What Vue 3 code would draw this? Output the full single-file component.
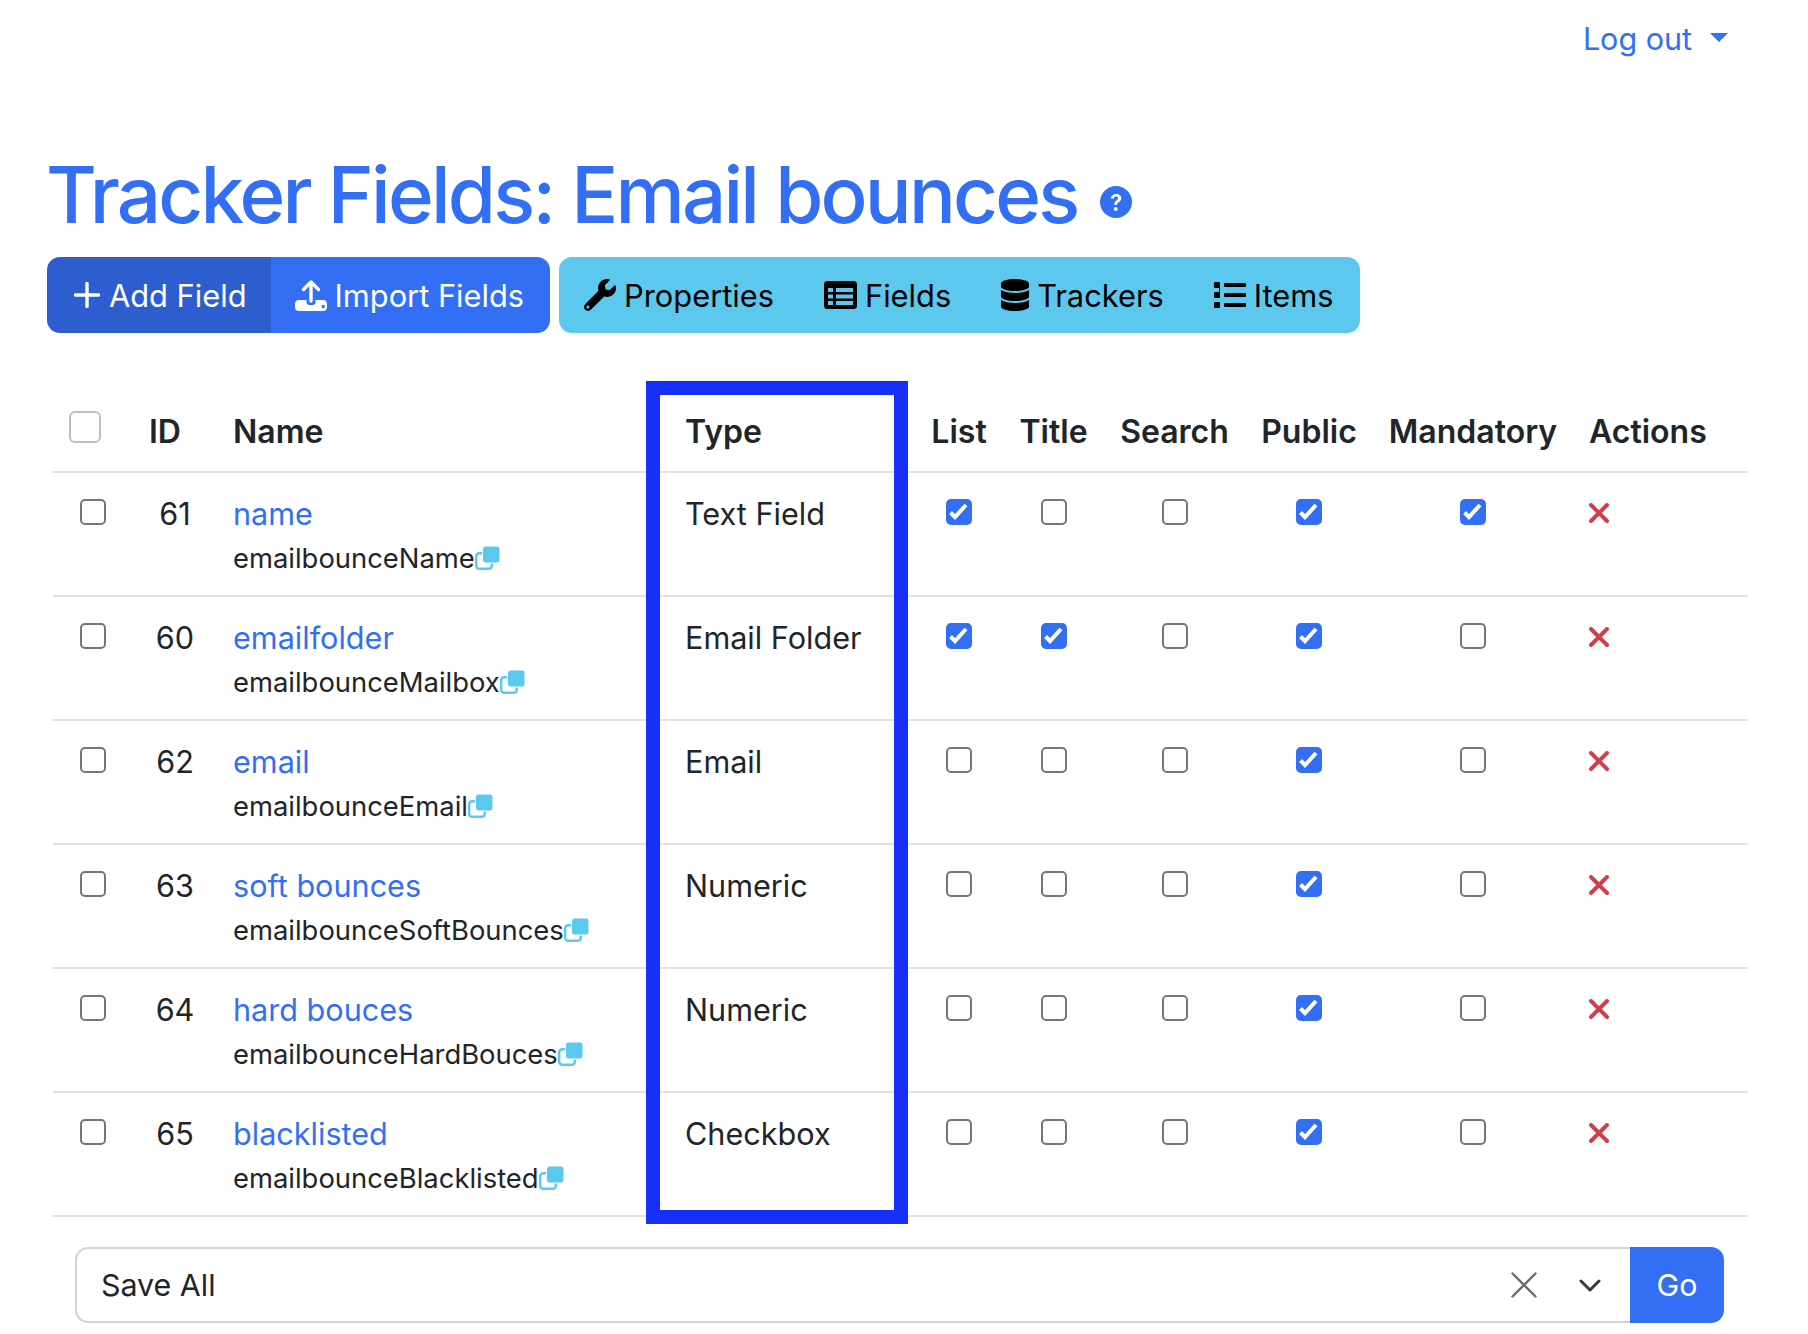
<script setup>
const rows = [
  { id: 61, name: 'name', perm: 'emailbounceName', type: 'Text Field', flags: [1, 0, 0, 1, 1] },
  { id: 60, name: 'emailfolder', perm: 'emailbounceMailbox', type: 'Email Folder', flags: [1, 1, 0, 1, 0] },
  { id: 62, name: 'email', perm: 'emailbounceEmail', type: 'Email', flags: [0, 0, 0, 1, 0] },
  { id: 63, name: 'soft bounces', perm: 'emailbounceSoftBounces', type: 'Numeric', flags: [0, 0, 0, 1, 0] },
  { id: 64, name: 'hard bouces', perm: 'emailbounceHardBouces', type: 'Numeric', flags: [0, 0, 0, 1, 0] },
  { id: 65, name: 'blacklisted', perm: 'emailbounceBlacklisted', type: 'Checkbox', flags: [0, 0, 0, 1, 0] }
]
const heads = ['List', 'Title', 'Search', 'Public', 'Mandatory']
</script>

<template>
  <div class="page">
    <nav class="topnav">
      <a class="logout">Log out<span class="caret"></span></a>
    </nav>

    <h1 class="title">
      <span>Tracker Fields: Email bounces</span>
      <svg class="help" viewBox="0 0 32 32">
        <circle cx="16" cy="16" r="16" fill="#336ff5" />
        <path d="M10.800 12.400c.3-3 2.400-4.500 5.300-4.500 3 0 5.200 1.700 5.200 4.300 0 1.900-1 3-2.500 4-1.200.8-1.600 1.300-1.600 2.500h-2.900c-.1-2.100.6-3.200 2-4.200 1.100-.8 1.800-1.300 1.800-2.200 0-1-.8-1.700-2-1.700-1.300 0-2.100.8-2.300 2.100z" fill="#fff" />
        <circle cx="15.700" cy="23" r="2" fill="#fff" />
      </svg>
    </h1>

    <div class="toolbar">
      <div class="group">
        <a class="btn btn-dark-primary">
          <svg class="ico plus" viewBox="0 0 26 26"><path d="M13 1.500v23M1.500 13h23" stroke="#fff" stroke-width="3.400" stroke-linecap="round" fill="none" /></svg>
          Add Field
        </a>
        <a class="btn btn-primary">
          <svg class="ico upload" viewBox="0 0 32 32">
            <path d="M16 22V3M8.500 10.500 16 3l7.500 7.500" stroke="#fff" stroke-width="3.400" stroke-linecap="round" stroke-linejoin="round" fill="none" />
            <path fill-rule="evenodd" d="M4 21h7.500v2a3 3 0 0 0 3 3h3a3 3 0 0 0 3-3v-2H28a4 4 0 0 1 4 4v3a4 4 0 0 1-4 4H4a4 4 0 0 1-4-4v-3a4 4 0 0 1 4-4zm22.500 6.500a1.700 1.700 0 1 0 0-.01z" fill="#fff" />
          </svg>
          Import Fields
        </a>
      </div>
      <div class="group teal">
        <a class="btn">
          <svg class="ico" viewBox="0 0 512 512"><path d="M507.730 109.100c-2.240-9.030-13.540-12.090-20.120-5.510l-74.360 74.360-67.880-11.310-11.310-67.880 74.360-74.360c6.620-6.620 3.430-17.900-5.660-20.160-47.380-11.740-99.550.91-136.580 37.930-39.640 39.640-50.550 97.100-34.050 147.200L18.740 402.760c-24.990 24.990-24.990 65.510 0 90.500 24.990 24.990 65.510 24.990 90.500 0l213.210-213.210c50.120 16.710 107.470 5.680 147.370-34.220 37.070-37.070 49.700-89.320 37.910-136.730zM64 472c-13.250 0-24-10.750-24-24 0-13.260 10.750-24 24-24s24 10.740 24 24c0 13.250-10.750 24-24 24z" /></svg>
          Properties
        </a>
        <a class="btn">
          <svg class="ico tbl" viewBox="0 0 33 28">
            <path fill-rule="evenodd" d="M3.500 0h26A3.500 3.500 0 0 1 33 3.500v21a3.500 3.500 0 0 1-3.500 3.500h-26A3.500 3.500 0 0 1 0 24.500v-21A3.500 3.500 0 0 1 3.500 0zM4 7v4h5V7zm8 0v4h17V7zM4 13.500v4h5v-4zm8 0v4h17v-4zM4 20v4h5v-4zm8 0v4h17v-4z" />
          </svg>
          Fields
        </a>
        <a class="btn">
          <svg class="ico db" viewBox="0 0 448 512"><path d="M448 73.143v45.714C448 159.143 347.667 192 224 192S0 159.143 0 118.857V73.143C0 32.857 100.333 0 224 0s224 32.857 224 73.143zM448 176v102.857C448 319.143 347.667 352 224 352S0 319.143 0 278.857V176c48.125 33.143 136.208 48.572 224 48.572S399.874 209.143 448 176zm0 160v102.857C448 479.143 347.667 512 224 512S0 479.143 0 438.857V336c48.125 33.143 136.208 48.572 224 48.572S399.874 369.143 448 336z" /></svg>
          Trackers
        </a>
        <a class="btn">
          <svg class="ico" viewBox="0 0 512 512"><path d="M80 368H16a16 16 0 0 0-16 16v64a16 16 0 0 0 16 16h64a16 16 0 0 0 16-16v-64a16 16 0 0 0-16-16zm0-320H16A16 16 0 0 0 0 64v64a16 16 0 0 0 16 16h64a16 16 0 0 0 16-16V64a16 16 0 0 0-16-16zm0 160H16a16 16 0 0 0-16 16v64a16 16 0 0 0 16 16h64a16 16 0 0 0 16-16V80a16 16 0 0 0-16-16zm416 176H176a16 16 0 0 0-16 16v32a16 16 0 0 0 16 16h320a16 16 0 0 0 16-16v-32a16 16 0 0 0-16-16zm0-320H176a16 16 0 0 0-16 16v32a16 16 0 0 0 16 16h320a16 16 0 0 0 16-16V80a16 16 0 0 0-16-16zm0 160H176a16 16 0 0 0-16 16v32a16 16 0 0 0 16 16h320a16 16 0 0 0 16-16v-32a16 16 0 0 0-16-16z" /></svg>
          Items
        </a>
      </div>
    </div>

    <div class="table-wrap">
      <table class="fields">
        <colgroup>
          <col class="w-sel" />
          <col class="w-id" />
          <col class="w-name" />
          <col class="w-type" />
          <col class="w-list" />
          <col class="w-title" />
          <col class="w-search" />
          <col class="w-public" />
          <col class="w-mand" />
          <col class="w-act" />
        </colgroup>
        <thead>
          <tr>
            <th class="c-sel"><input type="checkbox" class="check-all" /></th>
            <th class="c-idh">ID</th>
            <th>Name</th>
            <th>Type</th>
            <th v-for="h in heads" :key="h" class="center">{{ h }}</th>
            <th class="c-acth">Actions</th>
          </tr>
        </thead>
        <tbody>
          <tr v-for="r in rows" :key="r.id">
            <td class="c-sel"><input type="checkbox" class="check" /></td>
            <td class="c-id">{{ r.id }}</td>
            <td>
              <a class="link">{{ r.name }}</a>
              <div class="perm">
                {{ r.perm }}<svg class="copy" viewBox="0 0 25 24">
                  <rect x="1.200" y="7.200" width="15.600" height="15.600" rx="3" fill="none" stroke="#5bc8ee" stroke-width="2.400" />
                  <rect x="7.500" y="0" width="17.500" height="17" rx="3" fill="#5bc8ee" stroke="#fff" stroke-width="1" />
                </svg>
              </div>
            </td>
            <td>{{ r.type }}</td>
            <td v-for="(f, i) in r.flags" :key="i" class="center c-flag">
              <input type="checkbox" class="check" :checked="!!f" />
            </td>
            <td class="c-act">
              <svg class="del" viewBox="0 0 20 20"><path d="M2 2l16 16M18 2 2 18" stroke="#d0404c" stroke-width="4" stroke-linecap="round" fill="none" /></svg>
            </td>
          </tr>
        </tbody>
      </table>
      <div class="highlight"></div>
    </div>

    <div class="select-row">
      <div class="select">
        <span class="select-value">Save All</span>
        <svg class="clear" viewBox="0 0 26 26"><path d="M1.500 1.500l23 23M24.500 1.500l-23 23" stroke="#6c6c6c" stroke-width="2.400" stroke-linecap="round" fill="none" /></svg>
        <svg class="chev" viewBox="0 0 22 13"><path d="M2 2l9 9 9-9" stroke="#343a40" stroke-width="3" stroke-linecap="round" stroke-linejoin="round" fill="none" /></svg>
      </div>
      <a class="go">Go</a>
    </div>
  </div>
</template>

<style>
html, body { background: #fff; }
</style>

<style scoped>
.page {
  width: 1808px;
  height: 1334px;
  box-sizing: border-box;
  overflow: hidden;
  padding: 0 48px;
  font-family: Inter, "Liberation Sans", sans-serif;
  font-size: 30.600px;
  color: #212529;
}
.topnav {
  height: 76px;
  display: flex;
  justify-content: flex-end;
  align-items: center;
  padding-right: 80px;
  margin-right: -48px;
  box-sizing: border-box;
}
.logout { color: #336ff5; display: flex; align-items: center; font-size: 30.500px; }
.caret {
  margin-left: 18px;
  margin-top: -2px;
  border-top: 9px solid #336ff5;
  border-left: 9px solid transparent;
  border-right: 9px solid transparent;
}
.title {
  display: flex;
  align-items: center;
  height: 78px;
  margin: 80px 0 23px -2px;
  font-size: 78px;
  font-weight: 500;
  line-height: 1;
  letter-spacing: -2.800px;
  color: #336ff5;
}
.help { width: 32px; height: 32px; margin-left: 22px; margin-top: 14px; }
.toolbar { display: flex; gap: 9px; height: 76px; margin-left: -1px; }
.group { display: flex; border-radius: 13px; overflow: hidden; }
.btn {
  display: flex;
  align-items: center;
  gap: 8px;
  padding: 0 25px;
  color: #000;
  font-size: 30.800px;
}
.btn:last-child { padding-right: 27px; }
.btn-dark-primary { background: #2c5ecf; color: #fff; padding: 0 24px 0 27px; gap: 9px; }
.btn-primary { background: #336ff5; color: #fff; padding: 0 26px 0 24px; }
.btn-primary:last-child { padding-right: 26px; }
.teal { background: #5dc8ed; }
.ico { width: 32px; height: 32px; fill: #000; flex: none; }
.plus { width: 26px; height: 26px; fill: none; }
.upload { fill: none; }
.tbl { width: 33px; height: 28px; }
.db { width: 28px; }
.table-wrap { position: relative; margin: 48px 12px 0 5px; }
.fields {
  width: 1695px;
  table-layout: fixed;
  border-collapse: collapse;
}
.w-sel { width: 80px; }
.w-id { width: 84px; }
.w-name { width: 452px; }
.w-type { width: 246px; }
.w-list { width: 88px; }
.w-title { width: 101px; }
.w-search { width: 141px; }
.w-public { width: 128px; }
.w-mand { width: 200px; }
.w-act { width: 175px; }
th {
  height: 91px;
  box-sizing: border-box;
  padding: 0 16px 20px;
  vertical-align: bottom;
  text-align: left;
  font-size: 32px;
  font-weight: 600;
  border-bottom: 2px solid #dee2e6;
  white-space: nowrap;
}
td {
  height: 124px;
  box-sizing: border-box;
  padding: 17px 16px 13px 16px;
  vertical-align: top;
  line-height: 48px;
  border-bottom: 2px solid #dee2e6;
  white-space: nowrap;
}
.center { text-align: center; padding-left: 0; padding-right: 0; }
th.c-sel { padding: 0 0 28px 16px; }
td.c-sel { padding: 26px 0 0 27px; }
td.c-flag { padding: 26px 0 0; }
td.c-id { text-align: center; padding: 17px 0 0; }
.link { color: #336ff5; }
.perm { font-size: 27.400px; line-height: 40px; display: flex; align-items: center; }
.copy { width: 25px; height: 24px; flex: none; }
td.c-act { padding: 30px 0 0 16px; line-height: 0; }
.del { width: 20px; height: 20px; }
input[type='checkbox'] {
  appearance: none;
  -webkit-appearance: none;
  display: block;
  margin: 0;
  box-sizing: border-box;
  background: #fff;
}
.check {
  width: 26px;
  height: 26px;
  border: 2px solid #767676;
  border-radius: 5px;
}
.c-flag .check { margin: 0 auto; }
.check:checked {
  background-color: #336ff5;
  border-color: #336ff5;
  background-image: url("data:image/svg+xml,%3Csvg xmlns='http://www.w3.org/2000/svg' viewBox='0 0 26 26'%3E%3Cpath d='M4.500 13.500l4.500 4.500 11-12' stroke='%23fff' stroke-width='4' fill='none'/%3E%3C/svg%3E");
  background-size: 26px 26px;
  background-position: center;
}
.check-all {
  width: 32px;
  height: 32px;
  border: 2px solid #bfbfbf;
  border-radius: 6px;
}
.highlight {
  position: absolute;
  left: 593px;
  top: 0;
  width: 262px;
  height: 843px;
  box-sizing: border-box;
  border: 14px solid #1630f9;
  pointer-events: none;
}
.select-row {
  display: flex;
  margin: 30px 0 0 27px;
  width: 1649px;
  height: 76px;
  font-size: 30.400px;
}
.select {
  flex: 1;
  box-sizing: border-box;
  border: 2px solid #ced4da;
  border-right: 0;
  border-radius: 13px 0 0 13px;
  display: flex;
  align-items: center;
  padding-left: 24px;
}
.select-value { flex: 1; }
.clear { width: 26px; height: 26px; margin-right: 42px; }
.chev { width: 22px; height: 13px; margin-right: 29px; }
.go {
  width: 94px;
  background: #336ff5;
  color: #fff;
  border-radius: 0 13px 13px 0;
  display: flex;
  align-items: center;
  justify-content: center;
}
</style>
